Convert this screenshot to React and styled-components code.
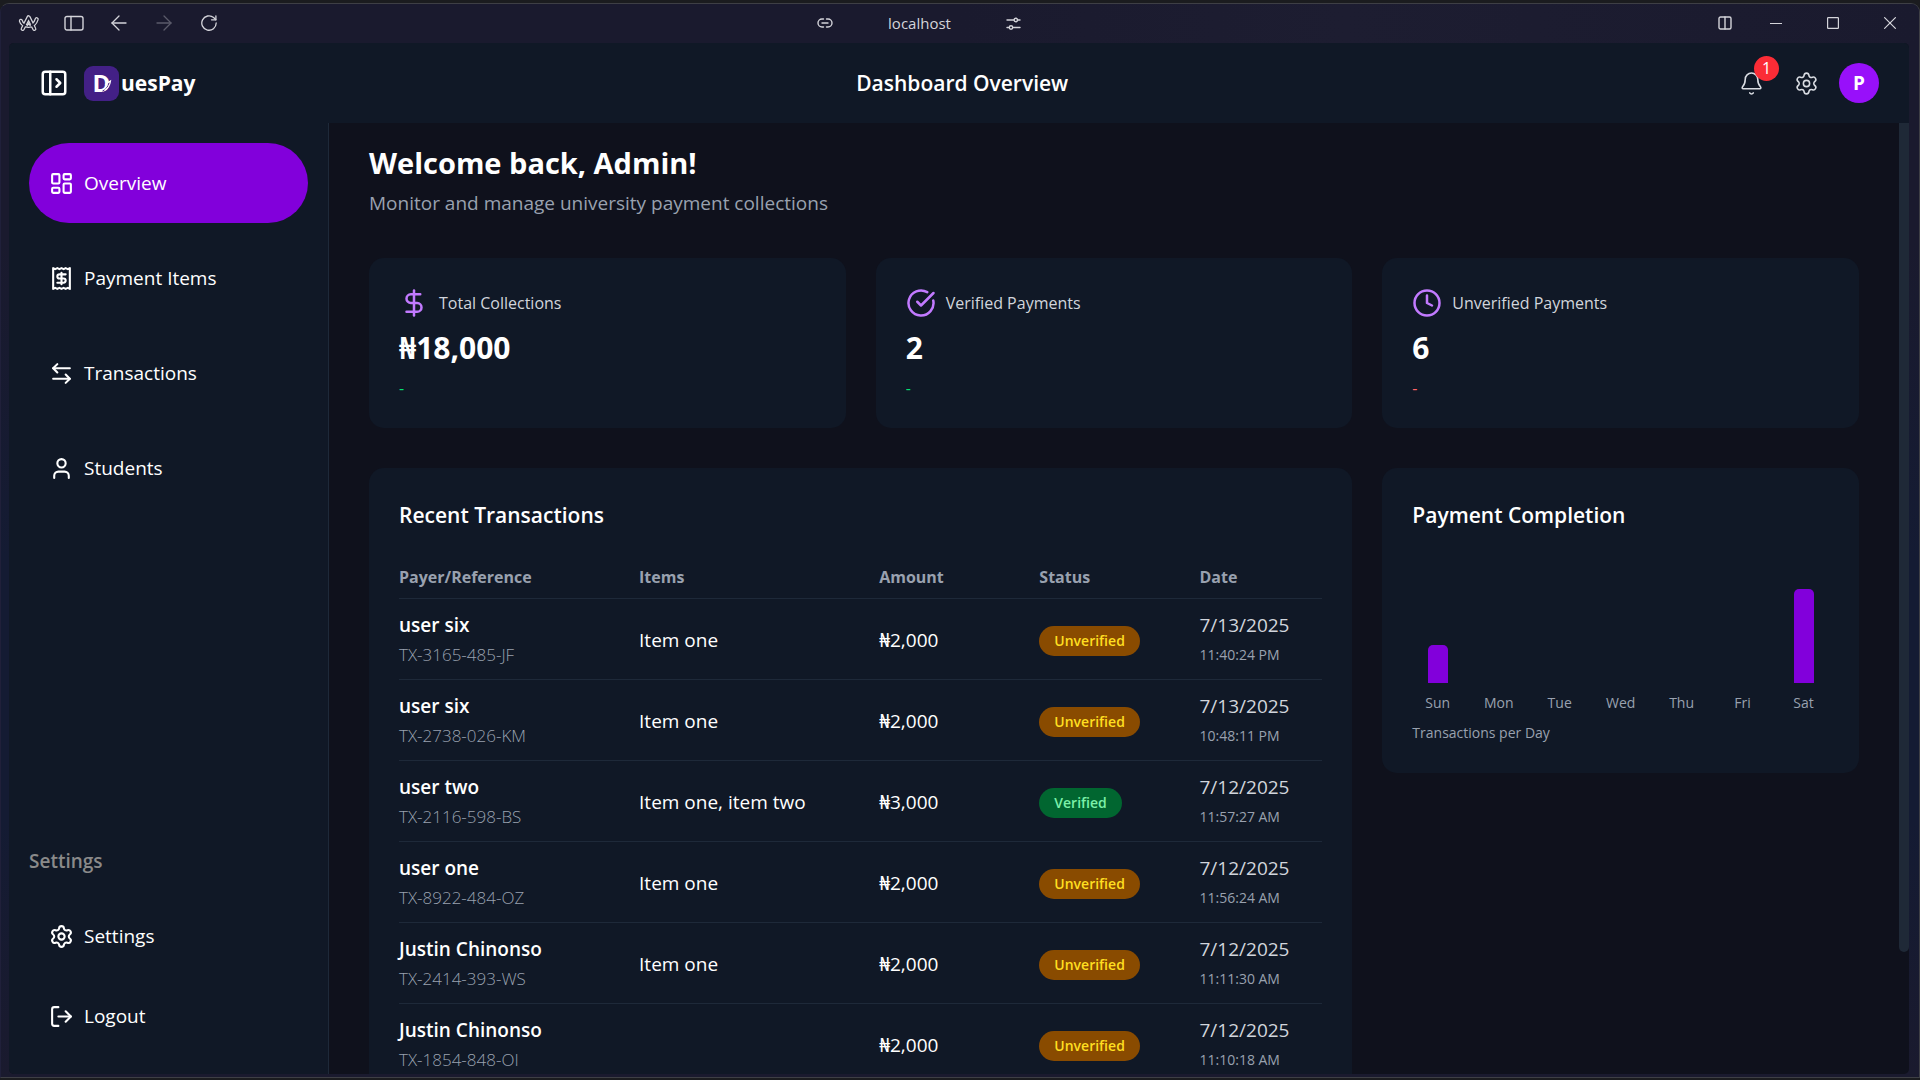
import React from "react";
import styled, { createGlobalStyle } from "styled-components";
import {
  ArrowLeft,
  ArrowLeftRight,
  ArrowRight,
  Bell,
  CircleCheckBig,
  Clock,
  DollarSign,
  LayoutDashboard,
  LogOut,
  PanelLeftOpen,
  Settings,
  User,
} from "lucide-react";

const GlobalStyle = createGlobalStyle`
  *, *::before, *::after { box-sizing: border-box; }
  body {
    margin: 0;
    background: #1b1c1f;
    color: #ffffff;
    font-family: "Open Sans", "Noto Sans", sans-serif;
    font-size: 19px;
    line-height: 30px;
  }
  h1, h2, h3, p { margin: 0; }
  button { font: inherit; color: inherit; background: none; border: 0; padding: 0; cursor: pointer; }
  a { color: inherit; text-decoration: none; }
  svg { display: block; flex: none; }
`;

/* ---------- browser window ---------- */

const Window = styled.div`
  display: flex;
  flex-direction: column;
  height: calc(100vh - 5px);
  margin-top: 3px;
  padding: 0 10px 3px 8px;
  border: 1px solid #3e3f45;
  border-left: 1px solid #20203a;
  border-radius: 9px 9px 0 0;
  background: linear-gradient(180deg, #1a1a2e 0%, #1a1a2e 22%, #141b33 52%, #141b33 76%, #1a1a2e 100%);
  overflow: hidden;
`;

const TitleBar = styled.div`
  display: grid;
  grid-template-columns: 1fr auto 1fr;
  align-items: center;
  height: 39px;
  flex: none;
  margin: 0 -10px 0 -8px;
  padding: 0 1px 1px 5px;
  background: linear-gradient(90deg, #1a1a2e 0%, #1a1a2e 50%, #1d1d31 70%, #1a1a2e 100%);
  color: #d4d4da;
`;

const ToolGroup = styled.div`
  display: flex;
  align-items: center;
  justify-content: ${(p) => (p.$end ? "flex-end" : "flex-start")};
`;

const ToolButton = styled.button`
  display: grid;
  place-items: center;
  width: ${(p) => (p.$wide ? 57 : 45)}px;
  height: 30px;
  opacity: ${(p) => (p.$muted ? 0.35 : 1)};
`;

const AddressBar = styled.div`
  display: flex;
  align-items: center;
  gap: 55px;
  margin-right: 86px;
  font-size: 15px;
  line-height: 20px;
`;

const Page = styled.div`
  display: flex;
  flex-direction: column;
  flex: 1;
  min-height: 0;
  border-radius: 5px;
  overflow: hidden;
  background: #0f111c;
`;

/* ---------- app header ---------- */

const Header = styled.header`
  display: flex;
  align-items: center;
  justify-content: space-between;
  height: 80px;
  flex: none;
  padding: 0 30px;
  background: #101826;
`;

const Brand = styled.div`
  display: flex;
  align-items: center;
  gap: 15px;
`;

const Logo = styled.a`
  display: flex;
  align-items: center;
  gap: 2px;
  font-size: 21px;
  font-weight: 700;
`;

const LogoMark = styled.span`
  position: relative;
  display: grid;
  place-items: center;
  width: 35px;
  height: 35px;
  border-radius: 9px;
  background: #432086;
  font-size: 24px;
  svg { position: absolute; inset: 0; }
`;

const PageTitle = styled.h1`
  font-size: 21px;
  font-weight: 600;
`;

const HeaderActions = styled.div`
  display: flex;
  align-items: center;
  gap: 20px;
  color: #d9dce2;
`;

const IconButton = styled.button`
  position: relative;
  display: grid;
  place-items: center;
  width: ${(p) => (p.$large ? 45 : 25)}px;
  height: 45px;
`;

const Counter = styled.span`
  position: absolute;
  top: -5px;
  right: -5px;
  width: 25px;
  height: 25px;
  border-radius: 50%;
  background: #fb2c36;
  color: #ffffff;
  font-size: 16px;
  line-height: 25px;
  text-align: center;
`;

const Avatar = styled.button`
  width: 40px;
  height: 40px;
  border-radius: 50%;
  background: #9810fa;
  color: #ffffff;
  font-weight: 700;
`;

/* ---------- sidebar ---------- */

const Body = styled.div`
  display: flex;
  flex: 1;
  min-height: 0;
`;

const Sidebar = styled.aside`
  display: flex;
  flex-direction: column;
  justify-content: space-between;
  width: 320px;
  flex: none;
  padding: 20px 20px 18px;
  border-right: 1px solid #1e2939;
  background: #101826;
`;

const NavList = styled.nav`
  display: flex;
  flex-direction: column;
  gap: ${(p) => (p.$spaced ? 15 : 0)}px;
`;

const NavLink = styled.a`
  display: flex;
  align-items: center;
  gap: 10px;
  height: 80px;
  padding: 0 20px;
  border-radius: 40px;
  background: ${(p) => (p.$active ? "#8200db" : "transparent")};
`;

const NavHeading = styled.h3`
  margin-bottom: 20px;
  color: #8a8a8a;
  font-size: 19px;
  font-weight: 600;
`;

/* ---------- main ---------- */

const Main = styled.main`
  flex: 1;
  min-width: 0;
  padding: 20px 40px;
  overflow-y: auto;
  scrollbar-width: none;
`;

const ScrollTrack = styled.div`
  width: 10px;
  flex: none;
`;

const ScrollThumb = styled.div`
  height: 87.2%;
  border-radius: 0 0 5px 5px;
  background: #1f2937;
`;

const Welcome = styled.h2`
  margin-bottom: 5px;
  font-size: 29px;
  font-weight: 700;
  line-height: 40px;
`;

const Subtitle = styled.p`
  margin-bottom: 40px;
  color: #99a1af;
`;

const Grid = styled.div`
  display: grid;
  grid-template-columns: repeat(3, minmax(0, 1fr));
  align-items: start;
  gap: 40px 30px;
`;

const Card = styled.section`
  grid-column: span ${(p) => p.$span || 1};
  padding: 30px;
  border-radius: 15px;
  background: #101826;
`;

const StatLabel = styled.div`
  display: flex;
  align-items: center;
  gap: 10px;
  margin-bottom: 10px;
  color: #d1d5dc;
  font-size: 16px;
  svg { color: #c27aff; }
`;

const StatValue = styled.p`
  margin-bottom: 10px;
  font-size: 30px;
  font-weight: 700;
  line-height: 40px;
`;

const StatTrend = styled.p`
  color: ${(p) => (p.$down ? "#ff6467" : "#05df72")};
  font-size: 16px;
  line-height: 20px;
`;

const CardTitle = styled.h3`
  margin-bottom: 20px;
  font-size: 21px;
  font-weight: 600;
  line-height: 35px;
`;

const Table = styled.table`
  width: 100%;
  table-layout: fixed;
  border-collapse: separate;
  border-spacing: 0;
  text-align: left;
`;

const HeadCell = styled.th`
  width: ${(p) => p.$width};
  height: 46px;
  padding: 2px 0 0;
  border-bottom: 1px solid #1e2939;
  color: #99a1af;
  font-size: 16px;
  font-weight: 700;
`;

const Cell = styled.td`
  height: 81px;
  padding: 11px 0 9px;
  border-bottom: 1px solid #1e2939;
`;

const Payer = styled.div`
  font-weight: 600;
`;

const Reference = styled.div`
  color: #99a1af;
  font-size: 17px;
  font-weight: 300;
`;

const DateText = styled.div`
  color: #d1d5dc;
`;

const TimeText = styled.div`
  color: #99a1af;
  font-size: 14px;
`;

const Badge = styled.span`
  display: inline-block;
  padding: 0 15px;
  border-radius: 15px;
  background: ${(p) => (p.$verified ? "#016630" : "#894b00")};
  color: ${(p) => (p.$verified ? "#7bf1a8" : "#ffdf20")};
  font-size: 14px;
  font-weight: 600;
  vertical-align: middle;
`;

const Chart = styled.div`
  display: grid;
  grid-template-columns: repeat(7, minmax(0, 1fr));
  gap: 10px;
  margin-bottom: 10px;
  color: #99a1af;
  font-size: 14px;
  line-height: 20px;
`;

const Day = styled.div`
  display: flex;
  flex-direction: column;
  align-items: center;
  gap: 10px;
`;

const BarSlot = styled.div`
  display: flex;
  align-items: flex-end;
  height: 130px;
`;

const Bar = styled.div`
  width: 20px;
  border-radius: 5px 5px 0 0;
  background: #8200db;
`;

const ChartCaption = styled.p`
  color: #99a1af;
  font-size: 14px;
  line-height: 20px;
`;

/* ---------- drawings ---------- */

const Line = ({ w, h, box, width = 1.2, children }) => (
  <svg width={w} height={h} viewBox={box} fill="none" stroke="currentColor" strokeWidth={width} strokeLinecap="round" strokeLinejoin="round" aria-hidden="true">
    {children}
  </svg>
);

const ARC_BAND = "M2.900 6.900C4.500 13 15.800 15 18.700 5.200";
const ARC_LEGS = "M4.700 14.900 10.600 3.300 16.300 14.900";

const ArcIcon = () => (
  <Line w={22} h={18} box="0 0 22 18">
    <g strokeWidth="4.200">
      <path d={ARC_BAND} />
      <path d={ARC_LEGS} />
    </g>
    <g stroke="#1a1a2e" strokeWidth="1.700">
      <path d={ARC_BAND} />
      <path d={ARC_LEGS} />
    </g>
    <path d="M9 11.900 10.600 8.700l1.700 3.200" strokeWidth="1.200" />
  </Line>
);

const ReceiptIcon = () => (
  <Line w={25} h={25} box="0 0 24 24" width={2}>
    <path d="M4 2v20l2-1 2 1 2-1 2 1 2-1 2 1 2-1 2 1V2l-2 1-2-1-2 1-2-1-2 1-2-1-2 1Z" />
    <path d="M16 8h-6a2 2 0 1 0 0 4h4a2 2 0 1 1 0 4H8" />
    <path d="M12 17.500v-11" />
  </Line>
);

const Swoosh = () => (
  <svg width="35" height="35" viewBox="0 0 35 35" fill="none" aria-hidden="true">
    <path d="M18.500 25c3.500-1.500 5.500-4 6.500-8.500" stroke="#432086" strokeWidth="1" />
    <path d="M21 18.500 26.500 15c-.5 4-2.500 7.500-6 9.500" stroke="#ffffff" strokeWidth="1.200" />
  </svg>
);

/* ---------- data ---------- */

const NAV = [
  { label: "Overview", icon: <LayoutDashboard size={25} />, active: true },
  { label: "Payment Items", icon: <ReceiptIcon /> },
  { label: "Transactions", icon: <ArrowLeftRight size={25} /> },
  { label: "Students", icon: <User size={25} /> },
];

const FOOTER_NAV = [
  { label: "Settings", icon: <Settings size={25} /> },
  { label: "Logout", icon: <LogOut size={25} /> },
];

const STATS = [
  { label: "Total Collections", value: "₦18,000", icon: DollarSign },
  { label: "Verified Payments", value: "2", icon: CircleCheckBig },
  { label: "Unverified Payments", value: "6", icon: Clock, down: true },
];

const COLUMNS = [
  ["Payer/Reference", "26%"],
  ["Items", "26%"],
  ["Amount", "17.35%"],
  ["Status", "17.35%"],
  ["Date", "auto"],
];

const ROWS = [
  ["user six", "TX-3165-485-JF", "Item one", "₦2,000", false, "7/13/2025", "11:40:24 PM"],
  ["user six", "TX-2738-026-KM", "Item one", "₦2,000", false, "7/13/2025", "10:48:11 PM"],
  ["user two", "TX-2116-598-BS", "Item one, item two", "₦3,000", true, "7/12/2025", "11:57:27 AM"],
  ["user one", "TX-8922-484-OZ", "Item one", "₦2,000", false, "7/12/2025", "11:56:24 AM"],
  ["Justin Chinonso", "TX-2414-393-WS", "Item one", "₦2,000", false, "7/12/2025", "11:11:30 AM"],
  ["Justin Chinonso", "TX-1854-848-OI", "", "₦2,000", false, "7/12/2025", "11:10:18 AM"],
];

const DAYS = [["Sun", 38], ["Mon", 0], ["Tue", 0], ["Wed", 0], ["Thu", 0], ["Fri", 0], ["Sat", 94]];

/* ---------- app ---------- */

function BrowserBar() {
  return (
    <TitleBar>
      <ToolGroup>
        <ToolButton aria-label="Arc"><ArcIcon /></ToolButton>
        <ToolButton aria-label="Toggle sidebar">
          <Line w={20} h={16} box="0 0 20 16" width={1.400}>
            <rect x="1" y="1.500" width="18" height="13.500" rx="2" />
            <path d="M7 1.500v13.500" />
          </Line>
        </ToolButton>
        <ToolButton aria-label="Back"><ArrowLeft size={24} strokeWidth={1.300} /></ToolButton>
        <ToolButton aria-label="Forward" $muted><ArrowRight size={24} strokeWidth={1.300} /></ToolButton>
        <ToolButton aria-label="Reload">
          <Line w={16} h={16} box="0 0 16 16" width={1.300}>
            <path d="M15.200 8A7.200 7.200 0 1 1 12.600 2.500L14.800 4.800" />
            <path d="M14.900.8v4h-4.400" />
          </Line>
        </ToolButton>
      </ToolGroup>
      <AddressBar>
        <Line w={16} h={10} box="0 0 16 10" width={1.400}>
          <path d="M6.500 1H5a4 4 0 0 0 0 8h1.500M9.500 1H11a4 4 0 0 1 0 8H9.500M5 5h6" />
        </Line>
        <span>localhost</span>
        <Line w={15} h={13} box="0 0 15 13" width={1.400}>
          <path d="M1 3h6.800M12 3h2M1 10.500h2M7 10.500h7" />
          <circle cx="9.800" cy="3" r="1.700" />
          <circle cx="5" cy="10.500" r="1.700" />
        </Line>
      </AddressBar>
      <ToolGroup $end>
        <ToolButton aria-label="Split view">
          <Line w={14} h={14} box="0 0 14 14" width={1.400}>
            <rect x="1" y="1" width="12" height="12" rx="1.500" />
            <path d="M7 1v12" />
          </Line>
        </ToolButton>
        <ToolButton aria-label="Minimize" $wide>
          <Line w={12} h={12} box="0 0 12 12"><path d="M.5 6.500h11" /></Line>
        </ToolButton>
        <ToolButton aria-label="Maximize" $wide>
          <Line w={12} h={12} box="0 0 12 12"><rect x=".6" y=".6" width="10.800" height="10.800" rx=".6" /></Line>
        </ToolButton>
        <ToolButton aria-label="Close" $wide>
          <Line w={12} h={12} box="0 0 12 12"><path d="m.6.6 10.800 10.800M11.400.6.6 11.400" /></Line>
        </ToolButton>
      </ToolGroup>
    </TitleBar>
  );
}

function AppHeader() {
  return (
    <Header>
      <Brand>
        <button aria-label="Open menu"><PanelLeftOpen size={30} /></button>
        <Logo href="#">
          <LogoMark>D<Swoosh /></LogoMark>
          <span>uesPay</span>
        </Logo>
      </Brand>
      <PageTitle>Dashboard Overview</PageTitle>
      <HeaderActions>
        <IconButton aria-label="Notifications" $large>
          <Bell size={25} strokeWidth={1.500} />
          <Counter>1</Counter>
        </IconButton>
        <IconButton aria-label="Settings"><Settings size={25} strokeWidth={1.500} /></IconButton>
        <Avatar aria-label="Profile">P</Avatar>
      </HeaderActions>
    </Header>
  );
}

function SideNav() {
  return (
    <Sidebar>
      <NavList $spaced>
        {NAV.map((n) => (
          <NavLink key={n.label} href="#" $active={n.active}>{n.icon}{n.label}</NavLink>
        ))}
      </NavList>
      <div>
        <NavHeading>Settings</NavHeading>
        <NavList>
          {FOOTER_NAV.map((n) => (
            <NavLink key={n.label} href="#">{n.icon}{n.label}</NavLink>
          ))}
        </NavList>
      </div>
    </Sidebar>
  );
}

function Transactions() {
  return (
    <Card $span={2}>
      <CardTitle>Recent Transactions</CardTitle>
      <Table>
        <thead>
          <tr>{COLUMNS.map(([name, width]) => <HeadCell key={name} $width={width}>{name}</HeadCell>)}</tr>
        </thead>
        <tbody>
          {ROWS.map(([name, ref, items, amount, verified, date, time]) => (
            <tr key={ref}>
              <Cell><Payer>{name}</Payer><Reference>{ref}</Reference></Cell>
              <Cell>{items}</Cell>
              <Cell>{amount}</Cell>
              <Cell><Badge $verified={verified}>{verified ? "Verified" : "Unverified"}</Badge></Cell>
              <Cell><DateText>{date}</DateText><TimeText>{time}</TimeText></Cell>
            </tr>
          ))}
        </tbody>
      </Table>
    </Card>
  );
}

function Completion() {
  return (
    <Card>
      <CardTitle>Payment Completion</CardTitle>
      <Chart>
        {DAYS.map(([day, size]) => (
          <Day key={day}>
            <BarSlot><Bar style={{ height: size }} /></BarSlot>
            <span>{day}</span>
          </Day>
        ))}
      </Chart>
      <ChartCaption>Transactions per Day</ChartCaption>
    </Card>
  );
}

export default function App() {
  return (
    <>
      <GlobalStyle />
      <Window>
        <BrowserBar />
        <Page>
          <AppHeader />
          <Body>
            <SideNav />
            <Main>
              <Welcome>Welcome back, Admin!</Welcome>
              <Subtitle>Monitor and manage university payment collections</Subtitle>
              <Grid>
                {STATS.map(({ label, value, icon: Icon, down }) => (
                  <Card key={label}>
                    <StatLabel><Icon size={30} />{label}</StatLabel>
                    <StatValue>{value}</StatValue>
                    <StatTrend $down={down}>-</StatTrend>
                  </Card>
                ))}
                <Transactions />
                <Completion />
              </Grid>
            </Main>
            <ScrollTrack><ScrollThumb /></ScrollTrack>
          </Body>
        </Page>
      </Window>
    </>
  );
}
